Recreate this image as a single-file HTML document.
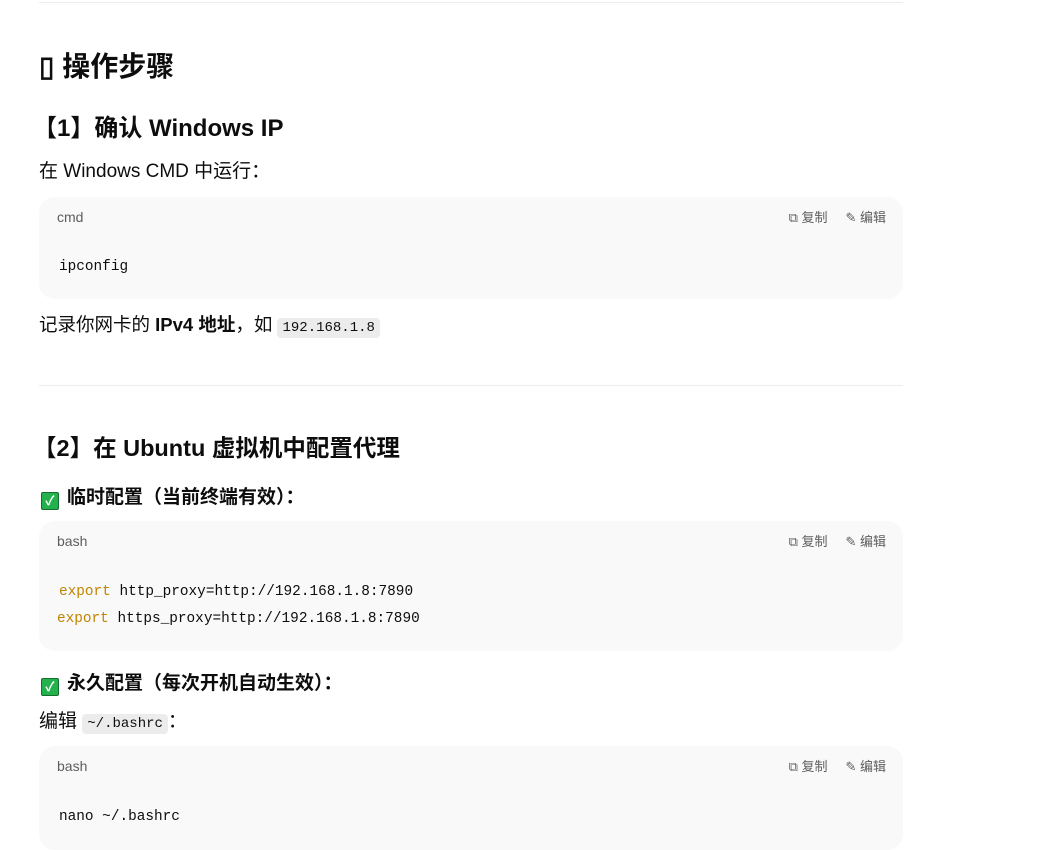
<!DOCTYPE html>
<html><head><meta charset="utf-8"><style>
body{margin:0;width:1037px;height:850px;overflow:hidden;background:#fff;font-family:"Liberation Sans","Noto Sans CJK SC",sans-serif;color:#0d0d0d;position:relative}
.a{position:absolute;left:39px;white-space:nowrap;line-height:1}
.hr{position:absolute;left:39px;width:864px;height:1px;background:#ececec}
.blk{position:absolute;left:39px;width:864px;background:#f9f9f9;border-radius:16px}
.lab{position:absolute;left:18px;top:12px;font-size:14px;color:#5d5d5d}
.act{position:absolute;right:17px;top:10px;font-size:13px;color:#5d5d5d;display:flex;gap:18px}
.act span{display:flex;align-items:center;gap:4px}
.mono{font-family:"Liberation Mono","DejaVu Sans Mono",monospace;font-size:14.4px;color:#0d0d0d}
.kw{color:#c18401}
.ic{display:inline-block;width:16px;height:16px;background:#22b14c;border:1px solid #156e2e;color:#fff;font-size:13px;text-align:center;line-height:16px;margin-right:8px;border-radius:2px;vertical-align:-2px;font-weight:bold}
.ci{background:#ececec;border-radius:4px;padding:2px 5px;font-family:"Liberation Mono",monospace;font-size:14px}
</style></head><body>
<div class="hr" style="top:2px"></div>
<div class="a" style="top:53px;font-size:28px;font-weight:bold">▯ 操作步骤</div>
<div class="a" style="top:117px;font-size:24px;font-weight:bold;left:33px">【1】确认 Windows IP</div>
<div class="a" style="top:162px;font-size:19px">在 Windows CMD 中运行：</div>
<div class="blk" style="top:197px;height:102px">
<div class="lab">cmd</div>
<div class="act"><span>⧉ 复制</span><span>✎ 编辑</span></div>
<div class="mono" style="position:absolute;left:20px;top:62px">ipconfig</div>
</div>
<div class="a" style="top:316px;font-size:18.5px">记录你网卡的 <b>IPv4 地址</b>，如 <span class="ci">192.168.1.8</span></div>
<div class="hr" style="top:385px"></div>
<div class="a" style="top:437px;font-size:23.5px;font-weight:bold;left:33px">【2】在 Ubuntu 虚拟机中配置代理</div>
<div class="a" style="top:488px;font-size:19px;font-weight:bold;left:41px"><span class="ic">✓</span>临时配置（当前终端有效）：</div>
<div class="blk" style="top:521px;height:130px">
<div class="lab">bash</div>
<div class="act"><span>⧉ 复制</span><span>✎ 编辑</span></div>
<div class="mono" style="position:absolute;left:20px;top:63px"><span class="kw">export</span> http_proxy=http://192.168.1.8:7890</div>
<div class="mono" style="position:absolute;left:18px;top:90px"><span class="kw">export</span> https_proxy=http://192.168.1.8:7890</div>
</div>
<div class="a" style="top:674px;font-size:19px;font-weight:bold;left:41px"><span class="ic">✓</span>永久配置（每次开机自动生效）：</div>
<div class="a" style="top:712px;font-size:19px">编辑 <span class="ci">~/.bashrc</span>：</div>
<div class="blk" style="top:746px;height:104px">
<div class="lab">bash</div>
<div class="act"><span>⧉ 复制</span><span>✎ 编辑</span></div>
<div class="mono" style="position:absolute;left:20px;top:63px">nano ~/.bashrc</div>
</div>
</body></html>
